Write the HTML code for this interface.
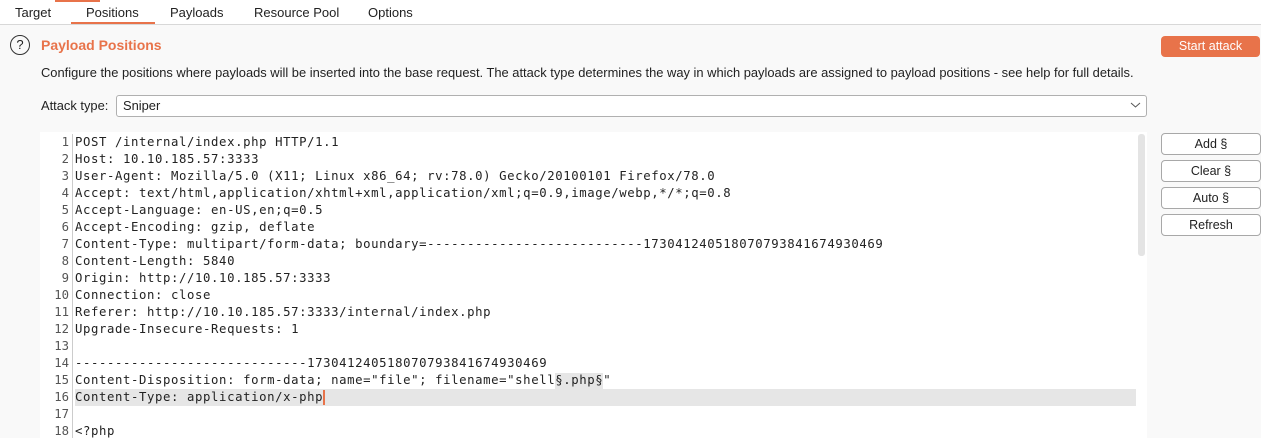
<!DOCTYPE html>
<html><head><style>
body{margin:0;width:1261px;height:438px;overflow:hidden;background:#f9f9f9;font-family:"Liberation Sans","DejaVu Sans",sans-serif;color:#222;position:relative}
.a{position:absolute;white-space:nowrap}
.tab{position:absolute;top:5px;font-size:13px;color:#222}
.btn{position:absolute;left:1161px;width:98px;height:20px;border:1px solid #a8a8a8;border-radius:4px;background:#fff;font-size:12.5px;text-align:center;line-height:20px}
.ln{position:absolute;left:40px;width:29px;text-align:right;font-family:"DejaVu Sans Mono",monospace;font-size:12.3px;color:#555}
.cd{position:absolute;left:75px;font-family:"DejaVu Sans Mono",monospace;font-size:12.3px;color:#222;white-space:pre;letter-spacing:0.6px}
</style></head><body>
<div class="a" style="left:0;top:0;width:1261px;height:24px;background:#fff;border-bottom:1px solid #d8d8d8"></div>
<div class="a" style="left:55px;top:0;width:45px;height:2px;background:#e8734a"></div>
<div class="tab" style="left:15px">Target</div>
<div class="tab" style="left:86px">Positions</div>
<div class="a" style="left:71px;top:22px;width:84px;height:2px;background:#e8734a"></div>
<div class="tab" style="left:170px">Payloads</div>
<div class="tab" style="left:254px">Resource Pool</div>
<div class="tab" style="left:368px">Options</div>
<div class="a" style="left:10px;top:35px;width:18px;height:18px;border:1.3px solid #333;border-radius:50%;text-align:center;font-size:13px;line-height:18px">?</div>
<div class="a" style="left:41px;top:37px;font-size:14px;font-weight:bold;color:#e8734a">Payload Positions</div>
<div class="a" style="left:1161px;top:36px;width:99px;height:21px;background:#e8734a;border-radius:4px;color:#fff;font-size:12.5px;text-align:center;line-height:21px">Start attack</div>
<div class="a" style="left:41px;top:65px;font-size:12.9px">Configure the positions where payloads will be inserted into the base request. The attack type determines the way in which payloads are assigned to payload positions - see help for full details.</div>
<div class="a" style="left:41px;top:98px;font-size:12.9px">Attack type:</div>
<div class="a" style="left:116px;top:95px;width:1029px;height:20px;border:1px solid #b0b0b0;border-radius:3px;background:#fff"></div>
<div class="a" style="left:123px;top:98px;font-size:12.9px">Sniper</div>
<svg class="a" style="left:1130px;top:101px" width="11" height="8"><path d="M1 2 L5.5 6 L10 2" fill="none" stroke="#555" stroke-width="1"/></svg>
<div class="a" style="left:40px;top:132px;width:1107px;height:306px;background:#fff"></div>
<div class="a" style="left:72px;top:134px;width:1px;height:304px;background:#ccc"></div>
<div class="a" style="left:1138px;top:134px;width:7px;height:122px;background:#e4e4e4;border-radius:3px"></div>
<div class="a" style="left:75px;top:389px;width:1061px;height:17px;background:#e6e6e6"></div>
<div class="a" style="left:555px;top:373px;width:48px;height:17px;background:#e6e6e6"></div>
<div class="a" style="left:323px;top:390px;width:2px;height:15px;background:#e8734a"></div>
<div class="btn" style="top:133px">Add §</div>
<div class="btn" style="top:160px">Clear §</div>
<div class="btn" style="top:187px">Auto §</div>
<div class="btn" style="top:214px">Refresh</div>
<div class="ln" style="top:135px">1</div><div class="cd" style="top:135px">POST /internal/index.php HTTP/1.1</div>
<div class="ln" style="top:152px">2</div><div class="cd" style="top:152px">Host: 10.10.185.57:3333</div>
<div class="ln" style="top:169px">3</div><div class="cd" style="top:169px">User-Agent: Mozilla/5.0 (X11; Linux x86_64; rv:78.0) Gecko/20100101 Firefox/78.0</div>
<div class="ln" style="top:186px">4</div><div class="cd" style="top:186px">Accept: text/html,application/xhtml+xml,application/xml;q=0.9,image/webp,*/*;q=0.8</div>
<div class="ln" style="top:203px">5</div><div class="cd" style="top:203px">Accept-Language: en-US,en;q=0.5</div>
<div class="ln" style="top:220px">6</div><div class="cd" style="top:220px">Accept-Encoding: gzip, deflate</div>
<div class="ln" style="top:237px">7</div><div class="cd" style="top:237px">Content-Type: multipart/form-data; boundary=---------------------------173041240518070793841674930469</div>
<div class="ln" style="top:254px">8</div><div class="cd" style="top:254px">Content-Length: 5840</div>
<div class="ln" style="top:271px">9</div><div class="cd" style="top:271px">Origin: http://10.10.185.57:3333</div>
<div class="ln" style="top:288px">10</div><div class="cd" style="top:288px">Connection: close</div>
<div class="ln" style="top:305px">11</div><div class="cd" style="top:305px">Referer: http://10.10.185.57:3333/internal/index.php</div>
<div class="ln" style="top:322px">12</div><div class="cd" style="top:322px">Upgrade-Insecure-Requests: 1</div>
<div class="ln" style="top:339px">13</div>
<div class="ln" style="top:356px">14</div><div class="cd" style="top:356px">-----------------------------173041240518070793841674930469</div>
<div class="ln" style="top:373px">15</div><div class="cd" style="top:373px">Content-Disposition: form-data; name="file"; filename="shell§.php§"</div>
<div class="ln" style="top:390px">16</div><div class="cd" style="top:390px">Content-Type: application/x-php</div>
<div class="ln" style="top:407px">17</div>
<div class="ln" style="top:424px">18</div><div class="cd" style="top:424px">&lt;?php</div>
</body></html>
